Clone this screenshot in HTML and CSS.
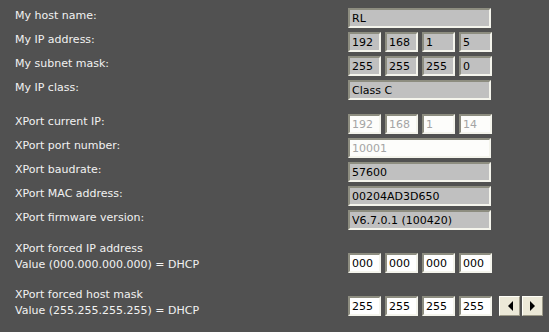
FILE: index.html
```html
<!DOCTYPE html>
<html>
<head>
<meta charset="utf-8">
<link rel="stylesheet" href="styles.css">
</head>
<body>
<div class="form">
  <div class="row">
    <div class="label">My host name:</div>
    <div class="fields"><input class="box wide ro" value="RL" readonly></div>
  </div>
  <div class="row">
    <div class="label">My IP address:</div>
    <div class="fields">
      <input class="box oct ro" value="192" readonly><input class="box oct ro" value="168" readonly><input class="box oct ro" value="1" readonly><input class="box oct ro" value="5" readonly>
    </div>
  </div>
  <div class="row">
    <div class="label">My subnet mask:</div>
    <div class="fields">
      <input class="box oct ro" value="255" readonly><input class="box oct ro" value="255" readonly><input class="box oct ro" value="255" readonly><input class="box oct ro" value="0" readonly>
    </div>
  </div>
  <div class="row">
    <div class="label">My IP class:</div>
    <div class="fields"><input class="box wide ro" value="Class C" readonly></div>
  </div>

  <div class="row group">
    <div class="label">XPort current IP:</div>
    <div class="fields">
      <input class="box oct dim" value="192" readonly><input class="box oct dim" value="168" readonly><input class="box oct dim" value="1" readonly><input class="box oct dim" value="14" readonly>
    </div>
  </div>
  <div class="row">
    <div class="label">XPort port number:</div>
    <div class="fields"><input class="box wide dim" value="10001" readonly></div>
  </div>
  <div class="row">
    <div class="label">XPort baudrate:</div>
    <div class="fields"><input class="box wide ro" value="57600" readonly></div>
  </div>
  <div class="row">
    <div class="label">XPort MAC address:</div>
    <div class="fields"><input class="box wide ro" value="00204AD3D650" readonly></div>
  </div>
  <div class="row">
    <div class="label">XPort firmware version:</div>
    <div class="fields"><input class="box wide ro" value="V6.7.0.1 (100420)" readonly></div>
  </div>

  <div class="row tall forced-ip">
    <div class="label">XPort forced IP address<br>Value (000.000.000.000) = DHCP</div>
    <div class="fields">
      <input class="box oct edit" value="000"><input class="box oct edit" value="000"><input class="box oct edit" value="000"><input class="box oct edit" value="000">
    </div>
  </div>
  <div class="row tall forced-mask">
    <div class="label">XPort forced host mask<br>Value (255.255.255.255) = DHCP</div>
    <div class="fields">
      <input class="box oct edit" value="255"><input class="box oct edit" value="255"><input class="box oct edit" value="255"><input class="box oct edit" value="255">
      <div class="nav">
        <button class="btn" type="button" aria-label="Previous"><svg width="6" height="10" viewBox="0 0 6 10"><polygon points="6,0 6,10 1,5" fill="#000"/></svg></button>
        <button class="btn" type="button" aria-label="Next"><svg width="6" height="10" viewBox="0 0 6 10"><polygon points="0,0 0,10 5,5" fill="#000"/></svg></button>
      </div>
    </div>
  </div>
</div>
</body>
</html>
```

FILE: styles.css
```css
html, body {
  margin: 0;
  padding: 0;
  background: #515151;
}
body {
  width: 549px;
  height: 332px;
  overflow: hidden;
  font-family: "DejaVu Sans", Verdana, sans-serif;
  font-size: 11px;
  color: #f2f2f2;
}
.form {
  padding: 8px 0 0 15px;
}
.row {
  display: grid;
  grid-template-columns: 333px auto;
  align-items: start;
  height: 20px;
  margin-bottom: 4px;
}
.row.group {
  margin-top: 14px;
}
.label {
  line-height: 16px;
  white-space: nowrap;
}
.fields {
  display: flex;
  gap: 4px;
  align-items: center;
}
.box {
  box-sizing: border-box;
  height: 20px;
  margin: 0;
  padding: 0 2px;
  font-family: "DejaVu Sans", Verdana, sans-serif;
  font-size: 11px;
  color: #000;
  border-style: solid;
  border-width: 2px;
  border-color: #8d8d80 #f4f4ec #f4f4ec #8d8d80;
  outline: none;
}
.wide { width: 143px; }
.oct { width: 33px; }
.ro { background: #c0c0c0; }
.dim { background: #fdfdfb; color: #a4a4a4; }
.edit { background: #ffffff; color: #000; }

.row.tall {
  height: 32px;
}
.forced-ip {
  margin-top: 11px;
}
.forced-ip .fields {
  margin-top: 12px;
}
.forced-mask {
  margin-top: 14px;
}
.forced-mask .fields {
  margin-top: 9px;
}
.nav {
  display: flex;
  gap: 2px;
  margin-left: 3px;
}
.btn {
  box-sizing: border-box;
  width: 21px;
  height: 20px;
  margin: 0;
  padding: 0;
  display: flex;
  align-items: center;
  justify-content: center;
  background: #ece9d8;
  border-style: solid;
  border-width: 1px;
  border-color: #fffff8 #9d9a88 #9d9a88 #fffff8;
}
```
